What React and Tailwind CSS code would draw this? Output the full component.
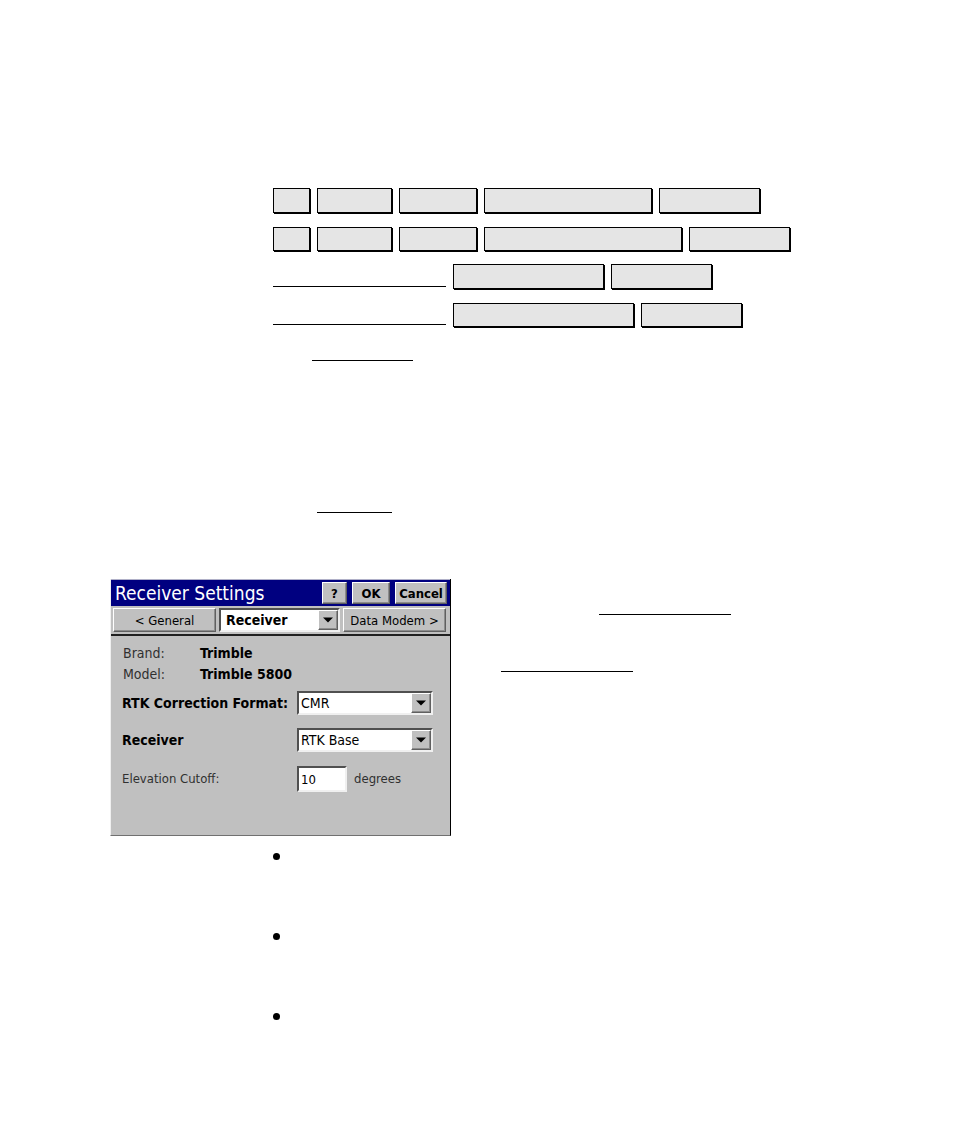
import { useState } from "react";

const menuPaths = [
  { h: "h-[25px]", blank: false, steps: ["w-[37px]", "w-[75px]", "w-[78px]", "w-[168px]", "w-[101px]"] },
  { h: "h-6", blank: false, steps: ["w-[37px]", "w-[75px]", "w-[78px]", "w-[198px]", "w-[101px]"] },
  { h: "h-[25px]", blank: true, steps: ["w-[151px]", "w-[101px]"] },
  { h: "h-6", blank: true, steps: ["w-[181px]", "w-[101px]"] },
];

const bevel =
  "border border-t-white border-l-white border-r-[#606060] border-b-[#606060] bg-[#c0c0c0] shadow-[inset_-1px_-1px_0_#8c8c8c]";
const sunken =
  "border-2 border-t-[#505050] border-l-[#505050] border-r-[#f0f0f0] border-b-[#f0f0f0] bg-white";

const Key = ({ className }) => (
  <span className={`border border-black bg-[#e5e5e5] shadow-[1px_1px_0_#000] ${className}`} />
);

const Dropdown = ({ id, label, value, options, onChange, className = "", pad = "pl-[2px]" }) => (
  <div className={`relative ${className}`}>
    <select
      id={id}
      aria-label={label}
      value={value}
      onChange={(e) => onChange(e.target.value)}
      className={`block w-full h-6 appearance-none pr-6 text-sm leading-none outline-none ${pad} ${sunken}`}
    >
      {options.map((option) => (
        <option key={option}>{option}</option>
      ))}
    </select>
    <span className={`absolute top-[2px] right-[2px] w-5 h-5 flex items-center justify-center pointer-events-none ${bevel}`}>
      <svg viewBox="0 0 10 6" className="w-[10px] h-[6px]">
        <path d="M0 0.5h10L5 5.5z" fill="#000" />
      </svg>
    </span>
  </div>
);

const ReceiverSettings = () => {
  const [page, setPage] = useState("Receiver");
  const [format, setFormat] = useState("CMR");
  const [mode, setMode] = useState("RTK Base");
  const [cutoff, setCutoff] = useState("10");

  return (
    <form
      onSubmit={(e) => e.preventDefault()}
      className="w-[341px] h-[257px] shrink-0 border-r border-b border-r-black border-b-[#707070] border-l border-l-[#f0f0f0] bg-[#c0c0c0] text-[13px] leading-5 text-black"
    >
      <header className="flex items-center gap-[5px] h-[27px] pl-1 pr-[3px] bg-[#000080] border-t border-t-[#b0b0c8]">
        <h1 className="flex-1 text-[19px] leading-6 text-white whitespace-nowrap">Receiver Settings</h1>
        <button type="button" className={`w-[25px] h-[22px] leading-none font-bold ${bevel}`}>?</button>
        <button type="submit" className={`w-[38px] h-[22px] leading-none font-bold ${bevel}`}>OK</button>
        <button type="button" className={`w-[52px] h-[22px] leading-none font-bold ${bevel}`}>Cancel</button>
      </header>

      <nav className="flex items-center gap-[3px] h-[30px] px-[2px] border-b-2 border-[#202020]">
        <button type="button" className={`w-[103px] h-6 leading-none ${bevel}`}>&lt; General</button>
        <Dropdown
          id="page"
          label="Page"
          value={page}
          options={["General", "Receiver", "Data Modem"]}
          onChange={setPage}
          className="w-[121px] font-bold"
          pad="pl-[5px]"
        />
        <button type="button" className={`w-[103px] h-6 leading-none whitespace-nowrap ${bevel}`}>Data Modem &gt;</button>
      </nav>

      <dl className="grid grid-cols-[77px_1fr] gap-y-[1px] pl-3 pt-[7px] text-sm">
        <dt className="text-[#303030]">Brand:</dt>
        <dd className="font-bold">Trimble</dd>
        <dt className="text-[#303030]">Model:</dt>
        <dd className="font-bold">Trimble 5800</dd>
      </dl>

      <div className="grid grid-cols-[175px_1fr] items-center gap-y-[13px] pl-[11px] pt-[7px]">
        <label htmlFor="format" className="text-sm font-bold whitespace-nowrap">RTK Correction Format:</label>
        <Dropdown id="format" value={format} options={["CMR", "RTCM"]} onChange={setFormat} className="w-[136px]" />
        <label htmlFor="mode" className="text-sm font-bold">Receiver</label>
        <Dropdown id="mode" value={mode} options={["RTK Base", "RTK Rover"]} onChange={setMode} className="w-[136px]" />
        <label htmlFor="cutoff" className="text-[#303030]">Elevation Cutoff:</label>
        <div className="flex items-center gap-[7px] pt-px">
          <input
            id="cutoff"
            type="text"
            value={cutoff}
            onChange={(e) => setCutoff(e.target.value)}
            className={`w-[50px] h-[26px] pl-[2px] outline-none ${sunken}`}
          />
          <span className="text-[#303030]">degrees</span>
        </div>
      </div>
    </form>
  );
};

export default function App() {
  return (
    <main className="min-h-screen bg-white pt-[188px] pb-[124px] font-['DejaVu_Sans_Condensed','DejaVu_Sans',sans-serif]">
      <section className="flex flex-col gap-[13px] pl-[273px]">
        {menuPaths.map((path, i) => (
          <div key={i} className="flex items-end gap-[7px] h-[25px]">
            {path.blank && <span className="self-start w-[173px] h-[23px] border-b border-black" />}
            {path.steps.map((width, j) => (
              <Key key={j} className={`${width} ${path.h}`} />
            ))}
          </div>
        ))}
        <p className="w-[101px] h-[21px] ml-[39px] border-b border-black" />
      </section>

      <p className="w-[75px] h-[152px] ml-[317px] border-b border-black" />

      <section className="flex gap-[50px] pt-[66px] pl-[110px]">
        <ReceiverSettings />
        <div className="pt-[35px]">
          <p className="w-[132px] ml-[98px] border-b border-black" />
          <p className="w-[132px] h-[57px] border-b border-black" />
        </div>
      </section>

      <ul className="flex flex-col gap-[73px] pt-[17px] pl-[273px]">
        <li className="size-[7px] rounded-full bg-black" />
        <li className="size-[7px] rounded-full bg-black" />
        <li className="size-[7px] rounded-full bg-black" />
      </ul>
    </main>
  );
}
